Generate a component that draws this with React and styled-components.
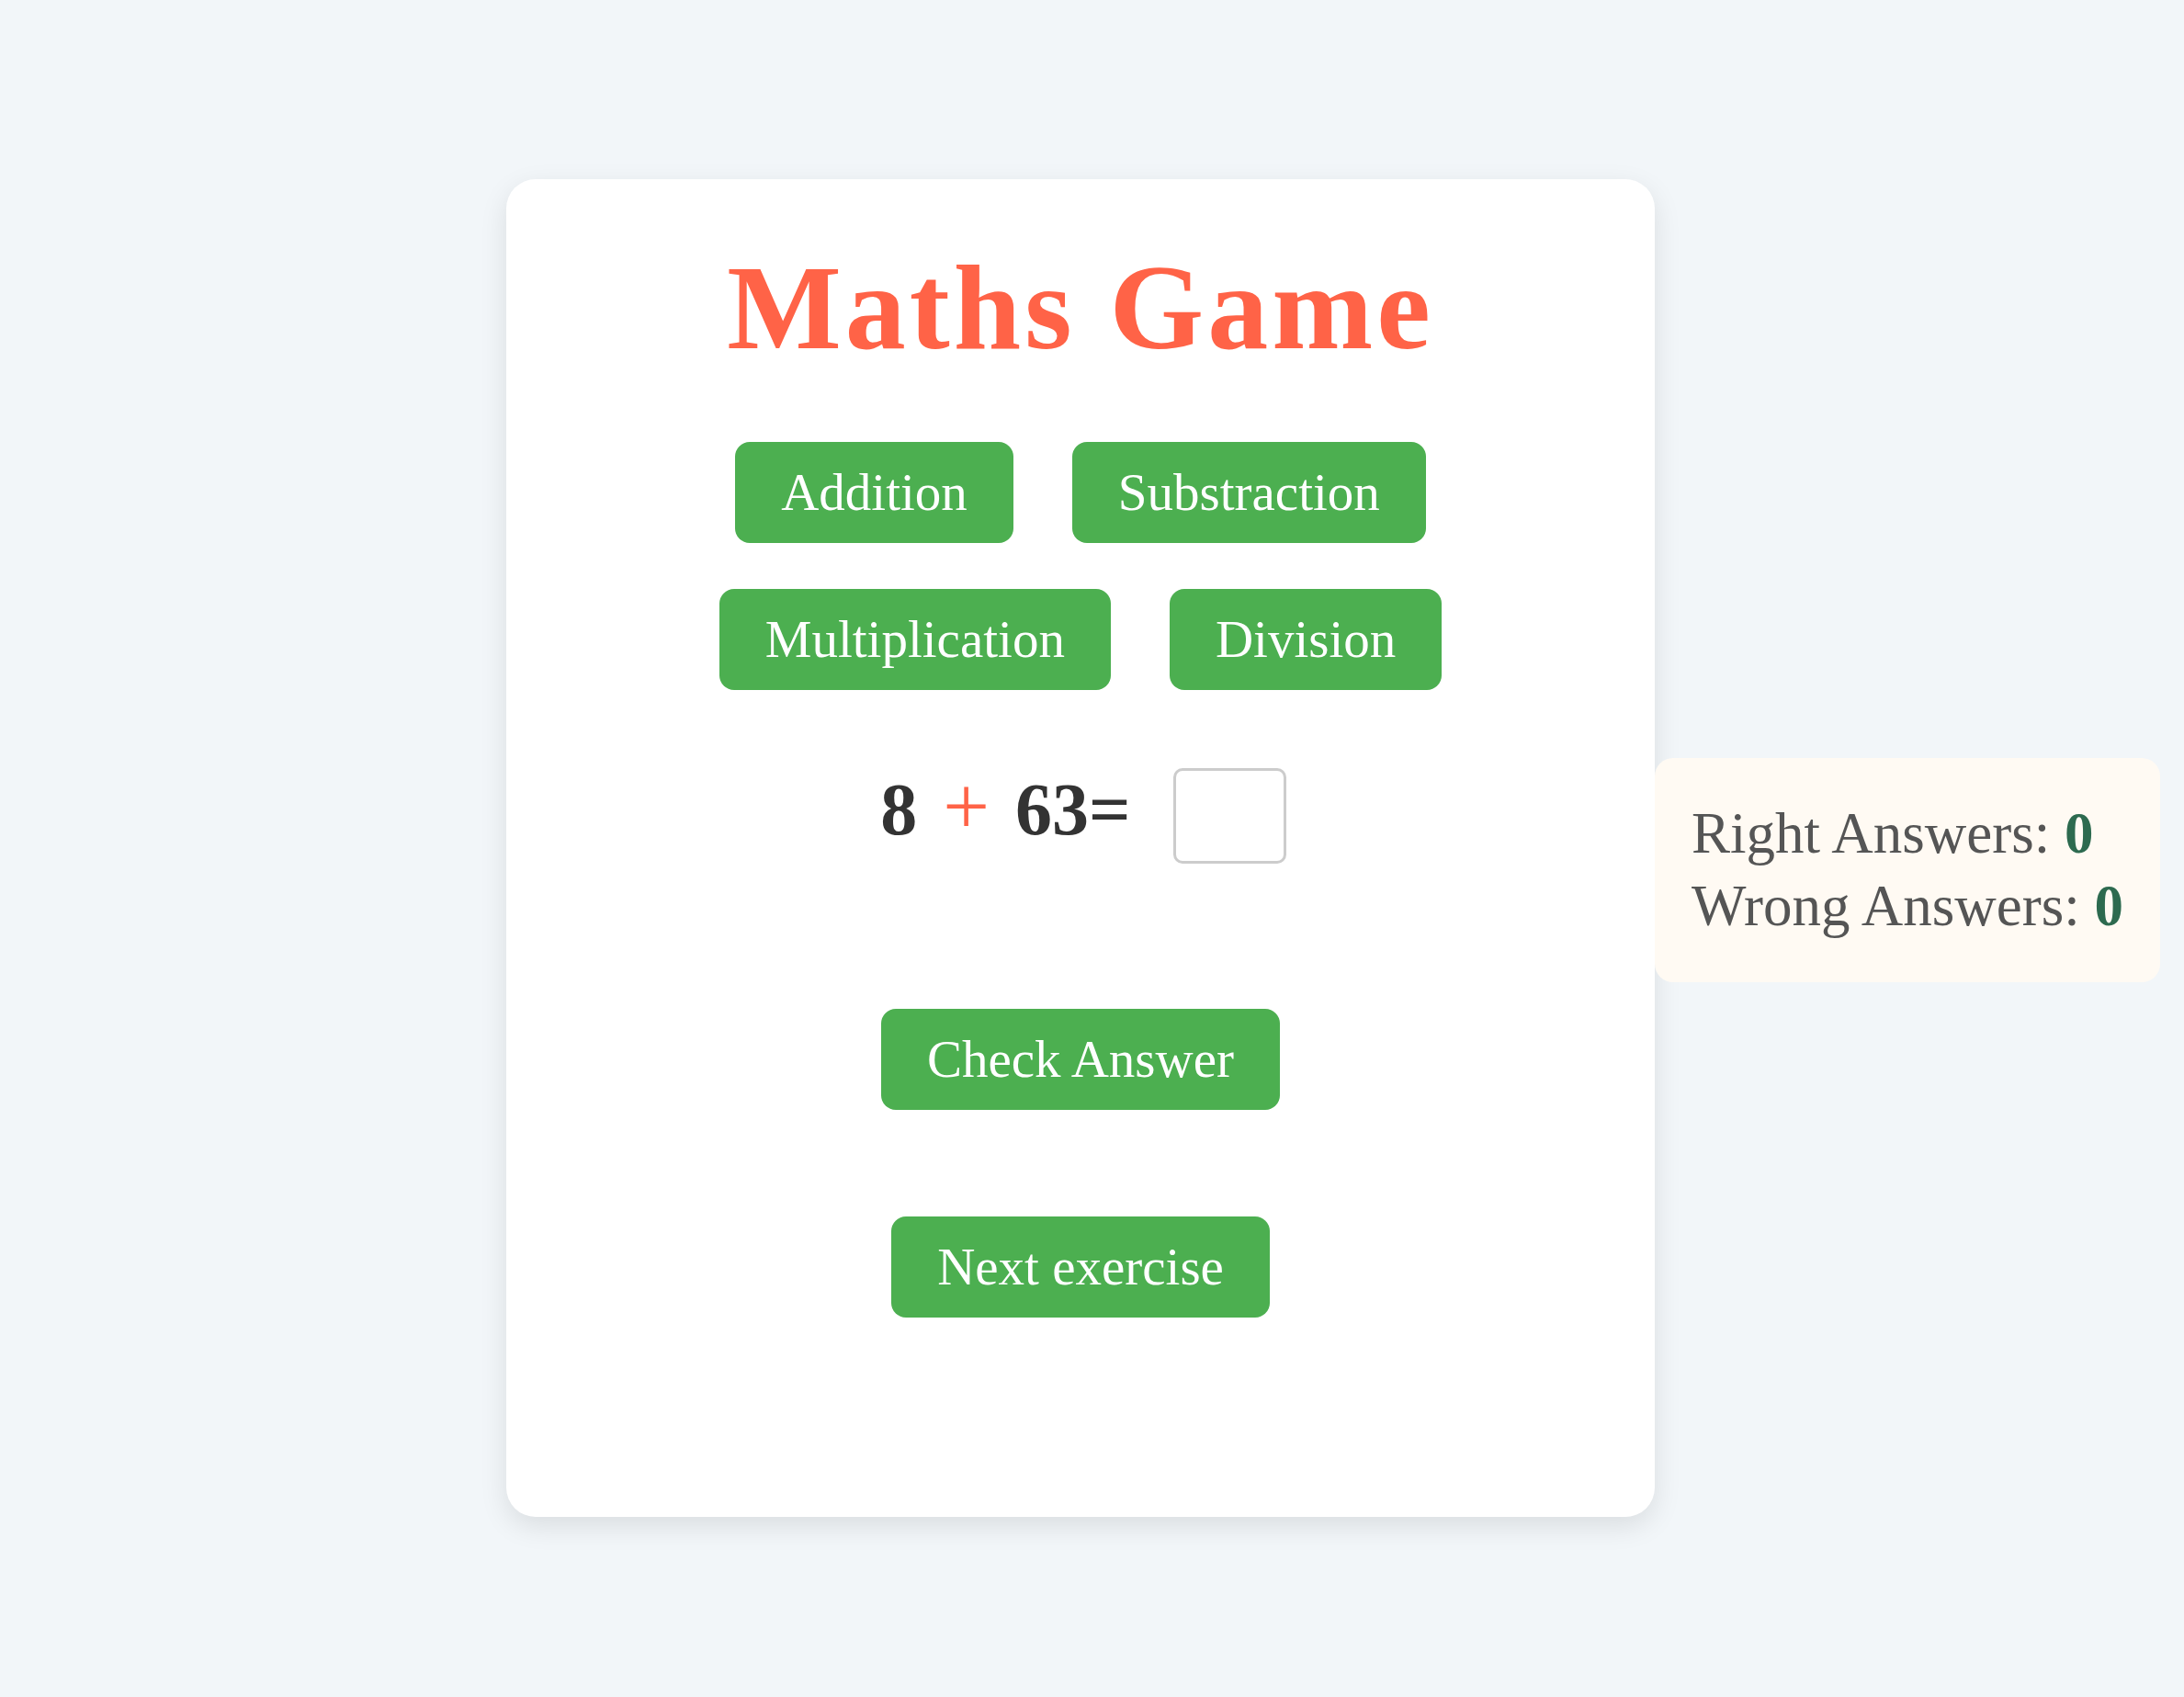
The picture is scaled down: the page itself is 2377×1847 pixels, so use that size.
import styled, { createGlobalStyle } from 'styled-components';

const GlobalStyle = createGlobalStyle`
  * {
    box-sizing: border-box;
  }

  body {
    margin: 0;
    background: #f2f6f9;
    font-family: "Liberation Serif", Georgia, serif;
  }
`;

const Page = styled.main`
  display: flex;
  justify-content: center;
  align-items: flex-start;
  min-height: 1847px;
  padding: 195px 25px 0 0;
`;

const Card = styled.section`
  position: relative;
  width: 1250px;
  display: flex;
  flex-direction: column;
  align-items: center;
  padding: 74px 0 217px;
  background: #ffffff;
  border-radius: 32px;
  box-shadow: 0 10px 30px rgba(0, 0, 0, 0.1);
`;

const Title = styled.h1`
  margin: 0;
  font-size: 132px;
  line-height: 1;
  font-weight: 700;
  letter-spacing: 4px;
  color: #ff6347;
`;

const ButtonRow = styled.div`
  display: flex;
  justify-content: center;
  gap: 64px;
  margin-top: ${(p) => p.$top}px;
`;

const Button = styled.button`
  border: none;
  border-radius: 16px;
  background: #4caf50;
  color: #ffffff;
  font-family: "Liberation Serif", Georgia, serif;
  font-size: 57px;
  line-height: 70px;
  padding: 20px 50px;
  margin-top: ${(p) => p.$top || 0}px;
  cursor: pointer;
`;

const Equation = styled.div`
  display: flex;
  align-items: center;
  margin-top: 82px;
  margin-left: 6px;
`;

const Expression = styled.div`
  display: flex;
  align-items: baseline;
  margin-bottom: 20px;
  font-size: 80px;
  line-height: 1;
  font-weight: 700;
  color: #333333;
`;

const Operator = styled.span`
  margin: 0 28px;
  font-weight: 400;
  font-size: 90px;
  color: #ff6347;
`;

const AnswerInput = styled.input`
  width: 123px;
  height: 104px;
  margin-left: 46px;
  border: 3px solid #cccccc;
  border-radius: 10px;
  background: #ffffff;
  font-family: "Liberation Serif", Georgia, serif;
  font-size: 50px;
  text-align: center;
  outline: none;
`;

const Score = styled.aside`
  position: absolute;
  left: 100%;
  top: 630px;
  padding: 43px 40px;
  background: #fffaf3;
  border-radius: 20px;
  white-space: nowrap;
  font-size: 63px;
  line-height: 79px;
  color: #555555;
`;

const ScoreValue = styled.strong`
  color: #2d6a4f;
`;

export default function App() {
  return (
    <>
      <GlobalStyle />
      <Page>
        <Card>
          <Title>Maths Game</Title>
          <ButtonRow $top={80}>
            <Button>Addition</Button>
            <Button>Substraction</Button>
          </ButtonRow>
          <ButtonRow $top={50}>
            <Button>Multiplication</Button>
            <Button>Division</Button>
          </ButtonRow>
          <Equation>
            <Expression>
              <span>8</span>
              <Operator>+</Operator>
              <span>63=</span>
            </Expression>
            <AnswerInput type="text" aria-label="answer" />
          </Equation>
          <Button $top={155}>Check Answer</Button>
          <Button $top={116}>Next exercise</Button>
          <Score>
            <div>
              Right Answers: <ScoreValue>0</ScoreValue>
            </div>
            <div>
              Wrong Answers: <ScoreValue>0</ScoreValue>
            </div>
          </Score>
        </Card>
      </Page>
    </>
  );
}
